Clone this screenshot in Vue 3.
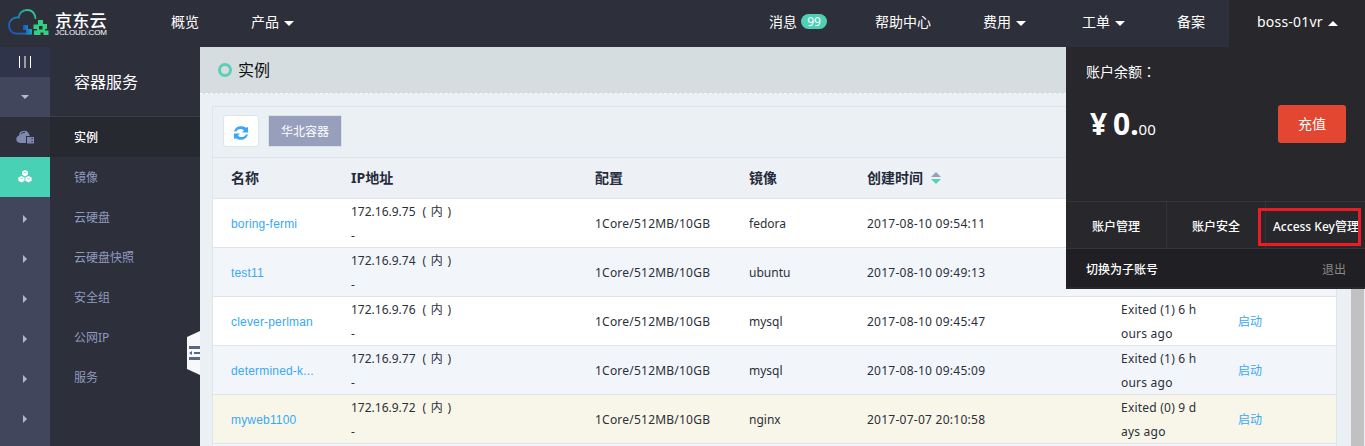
<script setup>
const leftNav = [
  { label: '概览', cls: 'n-overview' },
  { label: '产品', cls: 'n-product', caret: true },
]
const rightNav = [
  { label: '消息', cls: 'n-msg', badge: '99' },
  { label: '帮助中心', cls: 'n-help' },
  { label: '费用', cls: 'n-fee', caret: true },
  { label: '工单', cls: 'n-ticket', caret: true },
  { label: '备案', cls: 'n-record' },
]
const menu = ['实例', '镜像', '云硬盘', '云硬盘快照', '安全组', '公网IP', '服务']
const rows = [
  { name: 'boring-fermi', ip: '172.16.9.75', image: 'fedora', time: '2017-08-10 09:54:11', state: ['', ''] },
  { name: 'test11', ip: '172.16.9.74', image: 'ubuntu', time: '2017-08-10 09:49:13', state: ['', ''] },
  { name: 'clever-perlman', ip: '172.16.9.76', image: 'mysql', time: '2017-08-10 09:45:47', state: ['Exited (1) 6 h', 'ours ago'], action: '启动' },
  { name: 'determined-k...', ip: '172.16.9.77', image: 'mysql', time: '2017-08-10 09:45:09', state: ['Exited (1) 6 h', 'ours ago'], action: '启动' },
  { name: 'myweb1100', ip: '172.16.9.72', image: 'nginx', time: '2017-07-07 20:10:58', state: ['Exited (0) 9 d', 'ays ago'], action: '启动', hover: true },
]
</script>

<template>
  <div class="app">
    <header class="topbar">
      <div class="logo">
        <svg class="logo-mark" width="42" height="30" viewBox="0 0 42 30">
          <defs>
            <linearGradient id="cloud" x1="0" y1="1" x2="1" y2="0">
              <stop offset="0" stop-color="#1a50c0" />
              <stop offset=".5" stop-color="#1688b8" />
              <stop offset="1" stop-color="#35d38a" />
            </linearGradient>
            <linearGradient id="base" x1="0" y1="0" x2="1" y2="0">
              <stop offset="0" stop-color="#1a55c8" />
              <stop offset="1" stop-color="#1ba6ae" />
            </linearGradient>
          </defs>
          <path d="M28.500 11C28 5 24.500 2 20 2c-5 0-8 3.500-8.300 7.500C5.500 9 2 13 2 17.500c0 5 3.300 8.200 7.500 8.200H24" fill="none" stroke="url(#cloud)" stroke-width="1.800" />
          <path d="M16 17h5v4h4v5.600h-6V22h-3z" fill="url(#base)" />
          <path fill-rule="evenodd" d="M31 12h5v4h4v5h-2v1.500h3.500v4.500h-5v-2.500h-3v2.500H27v-4.500h3V21h-3.500v-4.500H31zM32 18v3.500h3.500V18z" fill="#35d07f" />
        </svg>
        <div class="logo-text"><b>京东云</b><span>JCLOUD.COM</span></div>
      </div>
      <nav class="nav">
        <a v-for="n in leftNav" :key="n.label" :class="n.cls">{{ n.label }}<i v-if="n.caret" class="caret"></i></a>
      </nav>
      <nav class="nav right">
        <a v-for="n in rightNav" :key="n.label" :class="n.cls">{{ n.label }}<em v-if="n.badge">{{ n.badge }}</em><i v-if="n.caret" class="caret"></i></a>
        <a class="n-user"><span>boss-01vr</span><i class="caret up"></i></a>
      </nav>
    </header>

    <div class="body">
      <aside class="rail">
        <div class="cell bars"><i></i><i></i><i></i></div>
        <div class="cell"><i class="down"></i></div>
        <div class="cell dark">
          <svg width="18" height="14" viewBox="0 0 18 14">
            <path d="M4 13A3.900 3.900 0 0 1 3 5.400 5.200 5.200 0 0 1 13.200 4.500L14 6H10v7z" fill="#7f88b0" />
            <path d="M5 4.200Q6.500 2 9 2.300" fill="none" stroke="#2d2f3a" />
            <path d="M11 7h7v6.500h-7zM15.500 8v1.200h1.200V8zm0 3v1.200h1.200V11z" fill="#7f88b0" fill-rule="evenodd" />
          </svg>
        </div>
        <div class="cell green">
          <svg width="14" height="13" viewBox="0 0 14 13">
            <g fill="#fff"><path d="M7 0l3 1.500v3.300L7 6.500 4 4.800V1.500z" /><path d="M3.500 6l3.100 1.600v3.200L3.500 12.500.4 10.800V7.600z" /><path d="M10.500 6l3.100 1.600v3.200l-3.100 1.700-3.100-1.700V7.600z" /></g>
            <g fill="none" stroke="#49d1b5" stroke-width=".7"><path d="M5.800 2.200 7 2.900l1.200-.7M2.300 8.200l1.200.7 1.200-.7M9.300 8.200l1.200.7 1.200-.7" /></g>
          </svg>
        </div>
        <div v-for="k in 7" :key="k" class="cell"><i class="tri"></i></div>
      </aside>

      <aside class="side">
        <h2>容器服务</h2>
        <a v-for="(m, i) in menu" :key="m" :class="{ active: i === 0 }">{{ m }}</a>
        <svg class="fold" width="13" height="44" viewBox="0 0 13 44">
          <path d="M0 6 13 0V44L0 38z" fill="#f7f8f9" />
          <path d="M2 15h11v3H2zM7 21h6v2H7zM2 26h11v3H2zM2 22l3-2v4z" fill="#566980" />
        </svg>
      </aside>

      <main class="main">
        <div class="title"><i></i>实例</div>
        <section class="panel">
          <div class="tools">
            <button class="refresh">
              <svg width="16" height="16" viewBox="0 0 16 16" fill="#38a8f8">
                <path d="M1 6.500C2.500 2.500 5 1.300 8 1.300c2 0 3.700.5 4.900 1.500L15 2v5.500H9l2-2C9.500 3.500 5 3 3 6.500z" />
                <path d="M15 9.500C13.500 13.500 11 14.700 8 14.700c-2 0-3.700-.5-4.900-1.500L1 14V8.500h6l-2 2c1.500 2 6 2.500 8-1z" />
              </svg>
            </button>
            <button class="region">华北容器</button>
          </div>
          <div class="row head">
            <span>名称</span><span>IP地址</span><span>配置</span><span>镜像</span>
            <span class="sort">创建时间<svg width="10" height="12" viewBox="0 0 10 12"><path d="M0 5 5 0l5 5z" fill="#93a2b8" /><path d="M0 7h10l-5 5z" fill="#58d0b2" /></svg></span>
            <span></span><span></span>
          </div>
          <div v-for="r in rows" :key="r.name" class="row" :class="{ hover: r.hover }">
            <a class="name">{{ r.name }}</a>
            <span class="two"><span>{{ r.ip }}<u>( 内 )</u></span><span>-</span></span>
            <span class="mid cfg">1Core/512MB/10GB</span>
            <span class="mid">{{ r.image }}</span>
            <span class="mid time">{{ r.time }}</span>
            <span class="two state"><span>{{ r.state[0] }}</span><span>{{ r.state[1] }}</span></span>
            <a class="mid">{{ r.action }}</a>
          </div>
          <div class="row"></div>
        </section>
      </main>
      <div class="scroll"></div>
    </div>

    <div class="account">
      <div class="balance">
        <div class="label">账户余额<span>：</span></div>
        <div class="line">
          <div class="money"><b class="yen">¥</b><b>0.</b><small>00</small></div>
          <button>充值</button>
        </div>
      </div>
      <div class="links"><a>账户管理</a><a>账户安全</a><a>Access Key管理</a></div>
      <div class="foot"><a>切换为子账号</a><a class="exit">退出</a></div>
      <div class="mark"></div>
    </div>
  </div>
</template>

<style>
body { overflow: hidden; }
</style>

<style scoped>
* { box-sizing: border-box; }
.app { position: relative; width: 1365px; height: 446px; overflow: hidden; display: flex; flex-direction: column; background: #ebf0f5; font: 12px/24px "Noto Sans", "Noto Sans CJK SC", sans-serif; color: #2b2f3a; }
button { border: 0; padding: 0; font: inherit; }
.topbar { flex: none; height: 47px; background: #2d2f3a; display: flex; color: #fff; font-size: 14px; }
.logo { width: 171px; padding: 8px 0 0 7px; display: flex; }
.logo-mark { flex: none; }
.logo-text { margin-left: 6px; padding-top: 4px; }
.logo-text b { display: block; font-family: "Noto Sans CJK SC", sans-serif; font-size: 17.200px; line-height: 15px; font-weight: 500; white-space: nowrap; }
.logo-text span { display: block; font: 8px/8px "Liberation Sans", sans-serif; letter-spacing: -.1px; margin-top: 2px; }
.nav { display: flex; line-height: 43px; }
.nav a { white-space: nowrap; display: flex; align-items: flex-start; }
.n-overview { width: 80px; }
.nav.right { margin-left: auto; }
.n-msg { width: 106px; }
.n-help { width: 108px; }
.n-fee { width: 99px; }
.n-ticket { width: 95px; }
.n-record { width: 52px; }
.n-user { width: 136px; height: 47px; background: #27272c; padding-left: 28px; }
.n-user span { width: 66px; letter-spacing: .2px; }
.caret { margin: 21px 0 0 5px; border: 5px solid transparent; border-top-color: #fff; border-bottom: 0; }
.caret.up { border-top: 0; border-bottom: 5px solid #fff; }
.nav em { width: 26px; height: 15px; margin: 14px 0 0 4px; border-radius: 8px; background: #4fd0b5; font: 12px/15px "Noto Sans", sans-serif; text-align: center; }

.body { flex: 1; min-height: 0; display: flex; }
.rail { width: 50px; background: #41465c; flex: none; overflow: hidden; }
.cell { height: 40px; display: flex; align-items: center; justify-content: center; }
.cell.bars { height: 30px; background: #30344a; gap: 4px; }
.bars i { flex: none; width: 1px; height: 12px; background: #fff; }
.bars i:nth-child(2) { width: 2px; background: #9a9da6; }
.dark { background: #2d2f3a; }
.green { background: #49d1b5; }
.green svg { margin-bottom: 2px; }
.down { border: 4px solid transparent; border-top-color: #b3b9cd; border-bottom: 0; }
.tri { border: 4px solid transparent; border-left-color: #b3b9cd; border-right: 0; margin-top: 3px; }
.side { position: relative; width: 150px; flex: none; background: #2d2f3a; }
.side h2 { margin: 0; height: 70px; border-bottom: 1px solid #3a3d48; padding-left: 24px; font-size: 16px; font-weight: 400; line-height: 71px; color: #fff; }
.side a { display: block; height: 40px; line-height: 42px; padding-left: 24px; color: #8f9abf; }
.side a.active { background: #262930; color: #fff; font-weight: 500; }
.fold { position: absolute; right: 0; top: 284px; }

.main { width: 1151px; flex: none; overflow: hidden; }
.title { height: 47px; background: #d5dde0; border-bottom: 1px dashed #f7f9fb; display: flex; align-items: center; gap: 6px; padding-left: 18px; font-size: 16px; color: #111; }
.title i { width: 14px; height: 14px; border: 3px solid #5bd0b2; border-radius: 50%; margin-top: -1px; }
.panel { margin: 12px 14px 0 12px; border: 1px solid #dde5eb; }
.tools { height: 51px; border-bottom: 1px solid #dde5eb; display: flex; gap: 9px; padding: 8px 10px; }
.refresh { width: 36px; height: 32px; border: 1px solid #dde5eb; border-radius: 3px; background: #fff; display: flex; align-items: center; justify-content: center; padding-top: 4px; }
.region { width: 74px; height: 32px; border: 1px solid #dbe2ea; background: #979fbd; color: #fff; padding-top: 2px; }
.row { height: 49px; border-bottom: 1px solid #dde5eb; background: #fff; display: grid; grid-template-columns: 120px 244px 154px 118px 254px 117px 116px; align-items: center; padding-left: 18px; white-space: nowrap; }
.row:nth-child(2n + 4) { background: #f2f6fb; }
.row.hover { background: #f8f6e8; }
.row.head { height: 41px; font-size: 14px; font-weight: 700; color: #252b3a; background: #edf1f6; }
.row a { color: #38a8f8; }
.row .name { font-family: "Liberation Sans", sans-serif; padding-top: 2px; letter-spacing: .18px; }
.mid { padding-top: 2px; }
.cfg { letter-spacing: .22px; }
.time { letter-spacing: .26px; }
.state { letter-spacing: .22px; }
.sort { display: flex; align-items: center; gap: 8px; }
.two { display: flex; flex-direction: column; height: 48px; padding-top: 1px; }
.two > span { height: 24px; }
.two u { text-decoration: none; margin-left: 7px; word-spacing: 1.500px; }
.scroll { width: 13px; background: #c1c1c1; }

.account { position: absolute; left: 1066px; top: 47px; width: 299px; height: 242px; background: #27272c; color: #fff; display: flex; flex-direction: column; }
.balance { height: 154px; padding: 13px 19px 0 20px; }
.label { height: 24px; line-height: 23px; font-size: 14px; }
.label span { font-family: "Noto Sans CJK TC", sans-serif; }
.line { display: flex; justify-content: space-between; margin-top: 21px; }
.money { display: flex; align-items: baseline; padding-left: 4px; height: 38px; line-height: 38px; }
.money b { font-size: 30px; }
.money .yen { width: 23px; }
.money small { font-size: 15px; }
.line button { width: 68px; height: 38px; border-radius: 3px; background: #e34631; color: #fff; font-size: 14px; }
.links { height: 48px; border-top: 1px solid #35353a; border-bottom: 1px solid #35353a; display: grid; grid-template-columns: 101px 99px 99px; line-height: 49px; text-align: center; font-weight: 500; overflow: hidden; }
.links a { border-right: 1px solid #323237; white-space: nowrap; }
.links a:last-child { border: 0; text-align: left; padding-left: 7px; }
.foot { height: 40px; background: #1f1f24; border-bottom: 2px solid #27272c; display: flex; justify-content: space-between; padding: 0 19px 0 20px; line-height: 41px; font-weight: 500; }
.foot .exit { color: #8c8780; font-weight: 400; }
.mark { position: absolute; left: 192px; top: 161px; width: 103px; height: 38px; border: 3px solid #ed1c24; }
</style>
